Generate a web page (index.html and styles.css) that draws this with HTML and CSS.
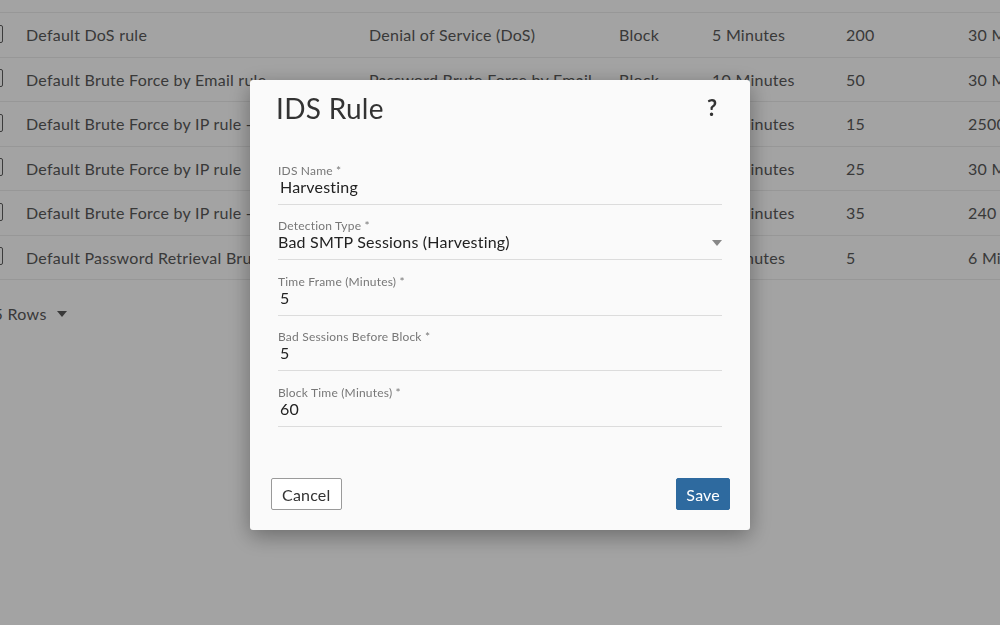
FILE: index.html
```html
<!DOCTYPE html>
<html lang="en">
<head>
    <meta charset="UTF-8">
    <meta name="viewport" content="width=device-width, initial-scale=1.0">
    <title>IDS Rules</title>
    <link rel="stylesheet" href="styles.css">
</head>
<body>
    <div class="page">
        <div class="rules">
            <div class="rules-head"></div>
            <div class="rule-row">
                <span class="check"></span>
                <span>Default DoS rule</span>
                <span>Denial of Service (DoS)</span>
                <span>Block</span>
                <span>5 Minutes</span>
                <span>200</span>
                <span>30 Minutes</span>
            </div>
            <div class="rule-row">
                <span class="check"></span>
                <span>Default Brute Force by Email rule</span>
                <span>Password Brute Force by Email</span>
                <span>Block</span>
                <span>10 Minutes</span>
                <span>50</span>
                <span>30 Minutes</span>
            </div>
            <div class="rule-row">
                <span class="check"></span>
                <span>Default Brute Force by IP rule - Long</span>
                <span>Password Brute Force by IP</span>
                <span>Block</span>
                <span>60 Minutes</span>
                <span>15</span>
                <span>2500 Minutes</span>
            </div>
            <div class="rule-row">
                <span class="check"></span>
                <span>Default Brute Force by IP rule</span>
                <span>Password Brute Force by IP</span>
                <span>Block</span>
                <span>10 Minutes</span>
                <span>25</span>
                <span>30 Minutes</span>
            </div>
            <div class="rule-row">
                <span class="check"></span>
                <span>Default Brute Force by IP rule - Medium</span>
                <span>Password Brute Force by IP</span>
                <span>Block</span>
                <span>30 Minutes</span>
                <span>35</span>
                <span>240 Minutes</span>
            </div>
            <div class="rule-row">
                <span class="check"></span>
                <span>Default Password Retrieval Brute Force rule</span>
                <span>Password Retrieval Brute Force</span>
                <span>Block</span>
                <span>5 Minutes</span>
                <span>5</span>
                <span>6 Minutes</span>
            </div>
        </div>
        <div class="pager">
            <span class="pager-size">25 Rows</span>
            <span class="caret"></span>
        </div>
    </div>

    <div class="overlay"></div>

    <div class="dialog">
        <div class="dialog-head">
            <h2>IDS Rule</h2>
            <span class="help">?</span>
        </div>
        <form class="dialog-body">
            <div class="field">
                <label>IDS Name *</label>
                <div class="value">Harvesting</div>
            </div>
            <div class="field">
                <label>Detection Type *</label>
                <div class="value select">
                    <span>Bad SMTP Sessions (Harvesting)</span>
                    <span class="arrow"></span>
                </div>
            </div>
            <div class="field">
                <label>Time Frame (Minutes) *</label>
                <div class="value">5</div>
            </div>
            <div class="field">
                <label>Bad Sessions Before Block *</label>
                <div class="value">5</div>
            </div>
            <div class="field">
                <label>Block Time (Minutes) *</label>
                <div class="value">60</div>
            </div>
        </form>
        <div class="dialog-actions">
            <button type="button" class="btn">Cancel</button>
            <button type="button" class="btn btn-primary">Save</button>
        </div>
    </div>
</body>
</html>
```

FILE: styles.css
```css
body {
    font-family: Lato, "Open Sans", sans-serif;
    margin: 0;
    padding: 0;
    background-color: #fff;
    color: #5a5a5a;
    overflow: hidden;
}
.page {
    margin-left: -14px;
    width: 1100px;
}
.rules-head {
    height: 12px;
    border-bottom: 1px solid #ececec;
}
.rule-row {
    display: grid;
    grid-template-columns: 40px 343px 250px 93px 134px 122px 118px;
    align-items: center;
    height: 44.5px;
    box-sizing: border-box;
    border-bottom: 1px solid #ececec;
    font-size: 16px;
    letter-spacing: 0.25px;
    white-space: nowrap;
    overflow: hidden;
}
.rule-row span {
    overflow: hidden;
}
.check {
    display: block;
    width: 15px;
    height: 16px;
    border: 1.5px solid #5f5f5f;
    border-radius: 2px;
    margin-top: -2px;
}
.pager {
    display: flex;
    align-items: center;
    height: 66px;
    font-size: 16px;
    margin-left: -2px;
}
.pager-size {
    letter-spacing: 0.3px;
}
.caret {
    display: inline-block;
    margin-left: 10px;
    margin-top: 2px;
    border-left: 5px solid transparent;
    border-right: 5px solid transparent;
    border-top: 6px solid #5a5a5a;
}
.overlay {
    position: fixed;
    inset: 0;
    background: rgba(0, 0, 0, 0.36);
}
.dialog {
    position: fixed;
    top: 80px;
    left: 250px;
    width: 500px;
    height: 450px;
    box-sizing: border-box;
    background: #fafafa;
    border-radius: 3px;
    box-shadow: 0 6px 22px rgba(0, 0, 0, 0.35);
    display: flex;
    flex-direction: column;
}
.dialog-head {
    display: flex;
    justify-content: space-between;
    align-items: flex-start;
    padding: 10px 33px 0 26px;
}
.dialog-head h2 {
    margin: 0;
    font-size: 28px;
    line-height: 36px;
    font-weight: 400;
    color: #333;
    letter-spacing: 0.3px;
}
.help {
    font-size: 22px;
    line-height: 36px;
    color: #333;
    font-weight: 700;
}
.dialog-body {
    padding: 37.5px 28px 0 28px;
    display: flex;
    flex-direction: column;
    gap: 14.5px;
}
.field label {
    display: block;
    font-size: 12px;
    line-height: 14px;
    color: #777;
    letter-spacing: 0.2px;
}
.field .value {
    font-size: 16px;
    line-height: 18px;
    color: #222;
    padding: 0 0 8px 2px;
    border-bottom: 1px solid #dcdcdc;
    letter-spacing: 0.2px;
}
.field .select {
    display: flex;
    justify-content: space-between;
    align-items: center;
    padding-left: 0;
}
.arrow {
    display: block;
    border-left: 5px solid transparent;
    border-right: 5px solid transparent;
    border-top: 6px solid #888;
    margin-top: 2px;
}
.dialog-actions {
    margin-top: auto;
    display: flex;
    justify-content: space-between;
    padding: 0 20px 20px 21px;
}
.btn {
    font-family: inherit;
    font-size: 16px;
    height: 32px;
    padding: 0 10px;
    background: #fff;
    color: #333;
    border: 1px solid #9a9a9a;
    border-radius: 2px;
    letter-spacing: 0.2px;
    cursor: pointer;
}
.btn-primary {
    background: #2e6a9f;
    border-color: #2e6a9f;
    color: #fff;
    padding: 0 9px;
}
```
